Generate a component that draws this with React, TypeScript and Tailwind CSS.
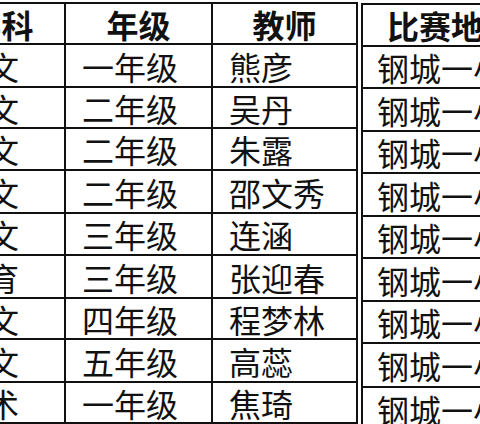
const ROWS = [
  { subject: '语文', grade: '一年级', teacher: '熊彦' },
  { subject: '语文', grade: '二年级', teacher: '吴丹' },
  { subject: '语文', grade: '二年级', teacher: '朱露' },
  { subject: '语文', grade: '二年级', teacher: '邵文秀' },
  { subject: '语文', grade: '三年级', teacher: '连涵' },
  { subject: '体育', grade: '三年级', teacher: '张迎春' },
  { subject: '语文', grade: '四年级', teacher: '程梦林' },
  { subject: '语文', grade: '五年级', teacher: '高蕊' },
  { subject: '美术', grade: '一年级', teacher: '焦琦' },
]

// row heights follow the photo (slightly uneven lines)
const LEFT_H = ['h-[41px]', 'h-[43px]', 'h-[41px]', 'h-[42px]', 'h-[43px]', 'h-[42px]', 'h-[43px]', 'h-[41px]', 'h-[43px]', 'h-[41px]']
const RIGHT_H = ['h-[42px]', 'h-[42px]', 'h-[43px]', 'h-[42px]', 'h-[43px]', 'h-[42px]', 'h-[43px]', 'h-[42px]', 'h-[44px]', 'h-[43px]']

const cell = 'flex items-center border-r-2 border-b-2 border-[#111]'

export default function App() {
  return (
    <div
      className="w-[480px] h-[424px] overflow-hidden bg-white text-[#111] flex items-start text-[32px] leading-none"
      style={{ fontFamily: '"Noto Sans CJK SC", "Noto Sans", sans-serif' }}
    >
      {/* 学科 / 年级 / 教师 */}
      <div className="mt-[2px] ml-[-61px] shrink-0 border-t-2 border-[#111] flex flex-col">
        <div className={`flex ${LEFT_H[0]} font-bold`}>
          <div className={`${cell} w-[127px] justify-center`}>学科</div>
          <div className={`${cell} w-[147px] justify-center`}>年级</div>
          <div className={`${cell} w-[145px] justify-center`}>教师</div>
        </div>
        {ROWS.map((r, i) => (
          <div key={i} className={`flex ${LEFT_H[i + 1]}`}>
            <div className={`${cell} w-[127px] pl-4`}>{r.subject}</div>
            <div className={`${cell} w-[147px] pl-4`}>{r.grade}</div>
            <div className={`${cell} w-[145px] pl-4`}>{r.teacher}</div>
          </div>
        ))}
      </div>

      {/* 比赛地点 — separate box in the photo */}
      <div className="mt-[3px] ml-[3px] shrink-0 border-t-2 border-[#111] flex flex-col">
        <div className={`flex ${RIGHT_H[0]} font-bold`}>
          <div className={`${cell} border-l-2 w-[180px] justify-center`}>比赛地点</div>
        </div>
        {ROWS.map((_, i) => (
          <div key={i} className={`flex ${RIGHT_H[i + 1]}`}>
            <div className={`${cell} border-l-2 w-[180px] pl-[14px]`}>钢城一小</div>
          </div>
        ))}
      </div>
    </div>
  )
}
